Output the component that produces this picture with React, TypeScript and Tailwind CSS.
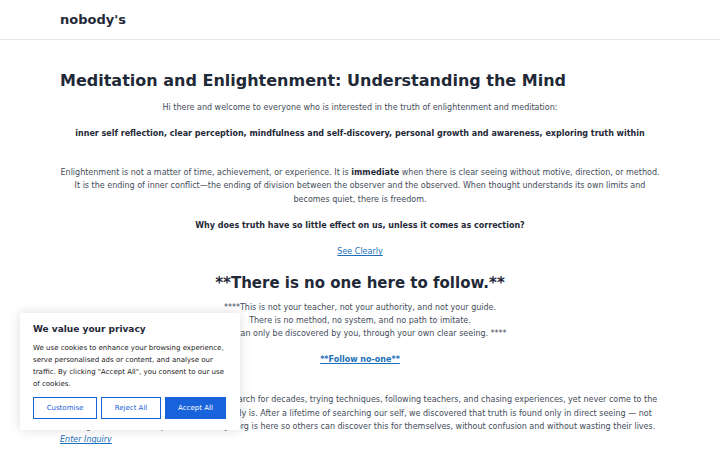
import React from "react";

export default function App() {
  return (
    <div className="relative min-h-[450px] bg-white text-[#434c59]" style={{ fontFamily: '"DejaVu Sans", sans-serif' }}>
      <header className="h-[40px] border-b border-[#e5e7eb]">
        <div className="mx-auto flex h-full w-[600px] items-center">
          <span className="text-[13px] font-bold text-[#1f2937]">nobody's</span>
        </div>
      </header>
      <main className="mx-auto w-[600px] pt-[31px]">
        <h1 className="text-[16px] font-bold leading-[20px] text-[#1f2937]">Meditation and Enlightenment: Understanding the Mind</h1>
        <p className="mt-[10px] text-center text-[8px] leading-[13px]">Hi there and welcome to everyone who is interested in the truth of enlightenment and meditation:</p>
        <p className="mt-[13px] text-center text-[8px] font-bold leading-[13px] text-[#1f2937]">inner self reflection, clear perception, mindfulness and self-discovery, personal growth and awareness, exploring truth within</p>
        <p className="mt-[26px] text-center text-[8px] leading-[13.4px]">
          Enlightenment is not a matter of time, achievement, or experience. It is <strong className="text-[#1f2937]">immediate</strong> when there is clear seeing without motive, direction, or method. It is the ending of inner conflict—the ending of division between the observer and the observed. When thought understands its own limits and becomes quiet, there is freedom.
        </p>
        <p className="mt-[13px] text-center text-[8px] font-bold leading-[13px] text-[#1f2937]">Why does truth have so little effect on us, unless it comes as correction?</p>
        <p className="mt-[13px] text-center text-[8px] leading-[13px]">
          <a href="#" className="text-[#1d6fb8] underline">See Clearly</a>
        </p>
        <h2 className="mt-[14px] text-center text-[15px] font-bold leading-[22px] text-[#1f2937]">**There is no one here to follow.**</h2>
        <p className="mt-[7px] text-center text-[8px] leading-[13px]">
          ****This is not your teacher, not your authority, and not your guide.<br />
          There is no method, no system, and no path to imitate.<br />
          Truth can only be discovered by you, through your own clear seeing. ****
        </p>
        <p className="mt-[13px] text-center text-[8px] font-bold leading-[13px]">
          <a href="#" className="text-[#1d6fb8] underline">**Follow no-one**</a>
        </p>
        <p className="mt-[27px] text-center text-[8px] leading-[13.4px]">
          Many seekers spend their lives; some do search for decades, trying techniques, following teachers, and chasing experiences, yet never come to the simple, direct realisation of what truth really is. After a lifetime of searching our self, we discovered that truth is found only in direct seeing — not through effort, belief or practice. Nobodys.org is here so others can discover this for themselves, without confusion and without wasting their lives.
        </p>
        <p className="mt-0 text-[8px] leading-[13px]">
          <a href="#" className="italic text-[#1d6fb8] underline">Enter Inquiry</a>
        </p>
      </main>

      <div className="absolute left-[20px] top-[313px] w-[220px] rounded-[2px] bg-white px-[13px] pb-[11px] pt-[9px] shadow-[0_0_12px_rgba(0,0,0,0.14)]">
        <div className="text-[9px] font-bold leading-[14px] text-[#1f2937]">We value your privacy</div>
        <p className="mt-[6px] text-[7px] leading-[12px] text-[#212121]">
          We use cookies to enhance your browsing experience, serve personalised ads or content, and analyse our traffic. By clicking "Accept All", you consent to our use of cookies.
        </p>
        <div className="mt-[7px] flex gap-[4px]">
          <button className="h-[22px] w-[64px] border-[1.5px] border-[#1863dc] bg-white text-[7px] text-[#1863dc]">Customise</button>
          <button className="h-[22px] w-[60px] border-[1.5px] border-[#1863dc] bg-white text-[7px] text-[#1863dc]">Reject All</button>
          <button className="h-[22px] w-[61px] border-[1.5px] border-[#1863dc] bg-[#1863dc] text-[7px] text-white">Accept All</button>
        </div>
      </div>
    </div>
  );
}
